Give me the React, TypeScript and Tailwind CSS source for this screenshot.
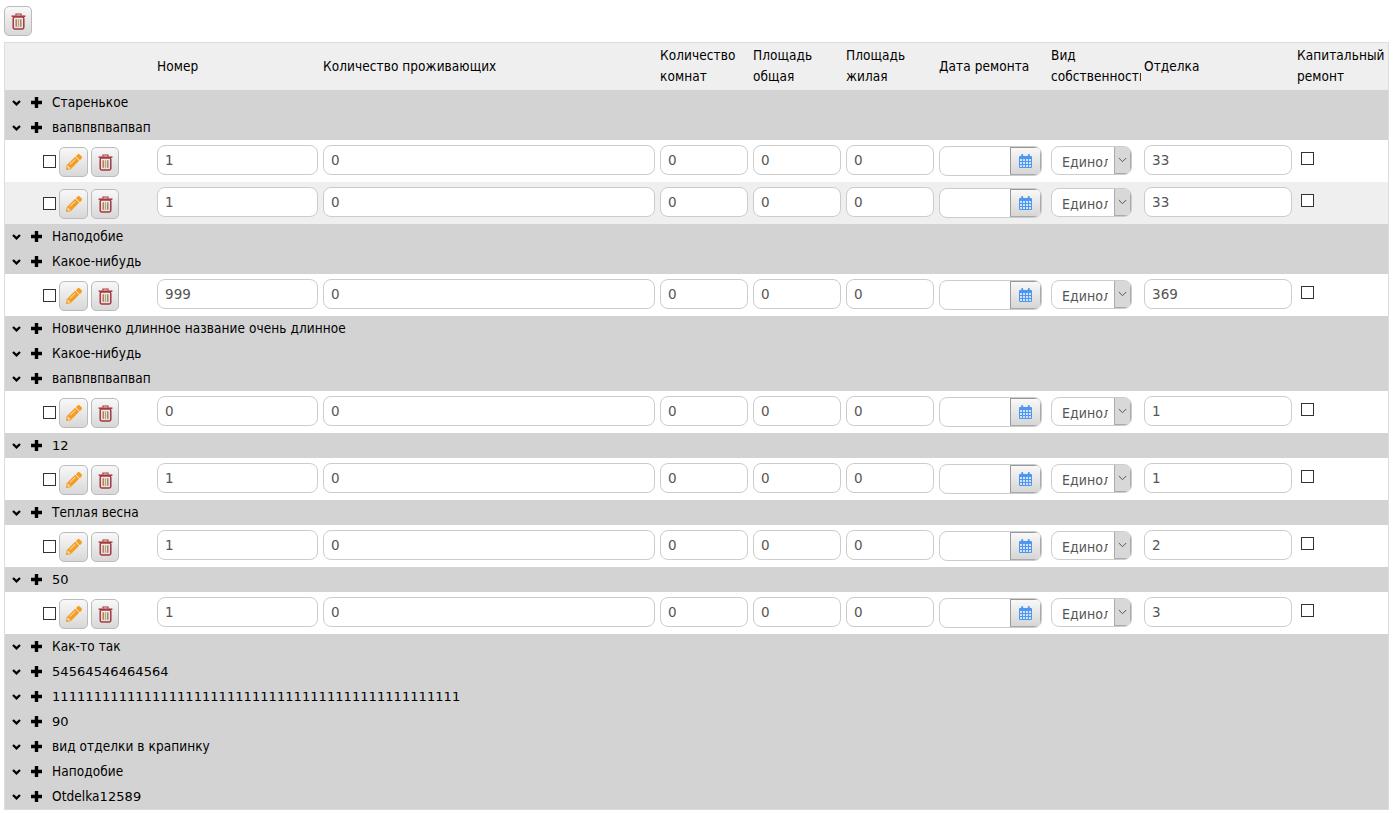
import React from "react";
import { FaPencilAlt } from "react-icons/fa";

const GRID = "grid grid-cols-[152px_166px_337px_93px_93px_93px_112px_93px_153px_1fr]";

function Trash() {
  return (
    <svg width="15" height="17" viewBox="0 0 15 17" fill="none">
      <path d="M5 2.6V1h5v1.6" stroke="#a8383c" strokeWidth="1.2" />
      <path d="M.6 3.2h13.8" stroke="#a8383c" strokeWidth="1.5" />
      <rect x="2.2" y="4" width="10.6" height="12" rx="1.4" stroke="#a8383c" strokeWidth="1.5" />
      <path d="M5.2 6.2v7.6" stroke="#b8684e" strokeWidth="1.3" />
      <path d="M7.5 6.2v7.6" stroke="#c9a84a" strokeWidth="1.3" />
      <path d="M9.8 6.2v7.6" stroke="#8a7a80" strokeWidth="1.3" />
    </svg>
  );
}

function Calendar() {
  return (
    <svg width="13" height="14" viewBox="0 0 13 14">
      <rect x="0" y="2" width="13" height="12" rx="1" fill="#4f97ee" />
      <rect x="2.2" y="0" width="2" height="4" rx="1" fill="#4f97ee" />
      <rect x="8.8" y="0" width="2" height="4" rx="1" fill="#4f97ee" />
      {[5, 8, 11].map((y) =>
        [1, 4, 7, 10].map((x) => <rect key={`${x}-${y}`} x={x} y={y} width="2" height="2" fill="#cfe3fb" />)
      )}
    </svg>
  );
}

function Chevron() {
  return (
    <svg width="9" height="6" viewBox="0 0 9 6" fill="none" className="mr-[10px] shrink-0">
      <path d="M1 1l3.5 3.4L8 1" stroke="#000" strokeWidth="2.2" />
    </svg>
  );
}

function Plus() {
  return (
    <svg width="11" height="11" viewBox="0 0 11 11" className="mr-[10px] shrink-0">
      <path d="M3.8 0h3.4v3.8H11v3.4H7.2V11H3.8V7.2H0V3.8h3.8z" fill="#000" />
    </svg>
  );
}

function IconBtn({ kind }: { kind: "edit" | "del" }) {
  return (
    <button className={`flex items-center justify-center h-[30px] ${kind === "edit" ? "w-[29px]" : "w-[28px]"} rounded-[5px] border border-[#bbb] bg-gradient-to-b from-[#f8f8f8] to-[#d8d8d8]`}>
      {kind === "edit" ? <FaPencilAlt className="text-[#f89c1c] text-[16px]" /> : <Trash />}
    </button>
  );
}

function Field({ v, w }: { v: string; w: string }) {
  return (
    <div className={`${w} h-[30px] rounded-[8px] border border-[#ccc] bg-white pl-[7px] flex items-center text-[#555] font-['DejaVu_Sans',sans-serif]`}>{v}</div>
  );
}

function Group({ name }: { name: string }) {
  const parts = name.split(/(\d+)/).filter(Boolean);
  return (
    <div className="h-[25px] bg-[#d3d3d3] flex items-center pl-[7px] text-black">
      <Chevron />
      <Plus />
      <span className="mb-[1px] whitespace-pre">
        {parts.map((p, i) =>
          /^\d+$/.test(p) ? (
            <span key={i} className="font-['DejaVu_Sans',sans-serif] text-[13px] tracking-[0.06px]">{p}</span>
          ) : (
            <span key={i}>{p}</span>
          )
        )}
      </span>
    </div>
  );
}

function Row({ num, fin, alt }: { num: string; fin: string; alt?: boolean }) {
  return (
    <div className={`${GRID} h-[42px] pt-[5px] ${alt ? "bg-[#efefef]" : "bg-white"}`}>
      <div className="flex items-start pl-[38px] pt-[2px] gap-[3px]">
        <input type="checkbox" readOnly className="appearance-none w-[13px] h-[13px] border border-[#333] bg-white mt-[8px] rounded-none" />
        <IconBtn kind="edit" />
        <IconBtn kind="del" />
      </div>
      <Field v={num} w="w-[161px]" />
      <Field v="0" w="w-[332px]" />
      <Field v="0" w="w-[88px]" />
      <Field v="0" w="w-[88px]" />
      <Field v="0" w="w-[88px]" />
      <div className="w-[103px] h-[30px] mt-[1px] rounded-[8px] border border-[#ccc] bg-white flex justify-end overflow-hidden">
        <span className="w-[31px] h-full border-l border-t border-[#999] border-b-[#aaa] border-b border-r border-r-[#aaa] bg-gradient-to-b from-[#f8f8f8] to-[#d6d6d6] flex items-center justify-center">
          <Calendar />
        </span>
      </div>
      <div className="w-[81px] h-[29px] mt-[1px] rounded-[8px] border border-[#ccc] bg-white flex overflow-hidden text-[#555]">
        <span className="w-[46px] ml-[10px] mr-[6px] pt-[5px] overflow-hidden whitespace-nowrap text-[14px]">Единоличная</span>
        <span className="w-[17px] bg-[#d8d8d8] border-l border-r border-b border-[#aaa] flex items-center justify-center">
          <svg width="9" height="6" viewBox="0 0 9 6" fill="none"><path d="M.8 1l3.7 3.7L8.2 1" stroke="#555" strokeWidth="1" /></svg>
        </span>
      </div>
      <Field v={fin} w="w-[148px]" />
      <div className="pl-[4px] pt-[7px]">
        <input type="checkbox" readOnly className="block appearance-none w-[13px] h-[13px] border border-[#333] bg-white rounded-none" />
      </div>
    </div>
  );
}

export default function App() {
  return (
    <div className="h-[813px] overflow-hidden bg-white text-[13.5px] tracking-[0.07px] leading-[21px] text-black font-['DejaVu_Sans_Condensed',sans-serif]">
      <div className="h-[42px] pl-[4px] pt-[6px]">
        <button className="flex items-center justify-center w-[28px] h-[30px] rounded-[5px] border border-[#bbb] bg-gradient-to-b from-[#f8f8f8] to-[#d8d8d8]">
          <Trash />
        </button>
      </div>
      <div className="ml-[4px] mr-[4px] border border-[#ddd]">
        <div className={`${GRID} h-[47px] pb-[1px] bg-[#efefef] items-center`}>
          <div />
          <div>Номер</div>
          <div>Количество проживающих</div>
          <div>Количество<br />комнат</div>
          <div>Площадь<br />общая</div>
          <div>Площадь<br />жилая</div>
          <div>Дата ремонта</div>
          <div className="overflow-hidden w-[90px] whitespace-nowrap">Вид<br />собственности</div>
          <div>Отделка</div>
          <div>Капитальный<br />ремонт</div>
        </div>
        <Group name="Старенькое" />
        <Group name="вапвпвпвапвап" />
        <Row num="1" fin="33" />
        <Row num="1" fin="33" alt />
        <Group name="Наподобие" />
        <Group name="Какое-нибудь" />
        <Row num="999" fin="369" />
        <Group name="Новиченко длинное название очень длинное" />
        <Group name="Какое-нибудь" />
        <Group name="вапвпвпвапвап" />
        <Row num="0" fin="1" />
        <Group name="12" />
        <Row num="1" fin="1" />
        <Group name="Теплая весна" />
        <Row num="1" fin="2" />
        <Group name="50" />
        <Row num="1" fin="3" />
        <Group name="Как-то так" />
        <Group name="54564546464564" />
        <Group name="1111111111111111111111111111111111111111111111111" />
        <Group name="90" />
        <Group name="вид отделки в крапинку" />
        <Group name="Наподобие" />
        <Group name="Otdelka12589" />
      </div>
    </div>
  );
}
